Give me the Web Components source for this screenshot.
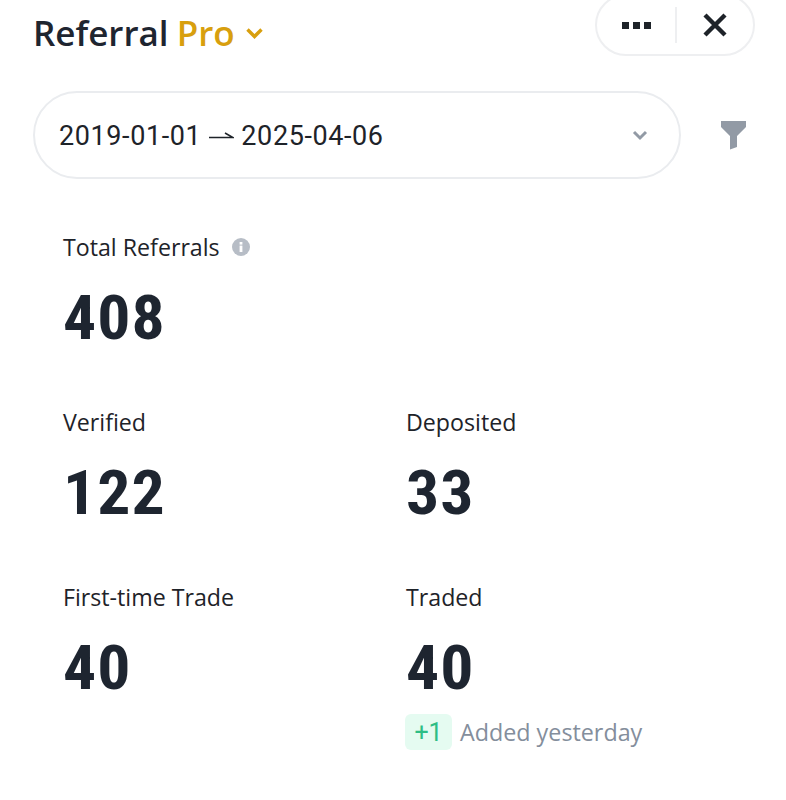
<!DOCTYPE html>
<html>
<head>
<meta charset="utf-8">
<title>Referral Pro</title>
<style>
  html, body { margin: 0; background: #fff; }
  body { width: 786px; height: 800px; overflow: hidden; font-family: "Open Sans", "Liberation Sans", sans-serif; color: #1e2329; }
</style>
</head>
<body>
<top-bar></top-bar>
<date-filter start="2019-01-01" end="2025-04-06"></date-filter>
<stat-grid>
  <stat-item label="Total Referrals" value="408" info style="grid-column: 1 / -1"></stat-item>
  <stat-item label="Verified" value="122"></stat-item>
  <stat-item label="Deposited" value="33"></stat-item>
  <stat-item label="First-time Trade" value="40"></stat-item>
  <stat-item label="Traded" value="40"><added-note count="+1">Added yesterday</added-note></stat-item>
</stat-grid>
<script>
  // small helper, every element here is just a style + markup in an open shadow root
  class Base extends HTMLElement {
    render(html) {
      this.attachShadow({ mode: 'open' }).innerHTML = html;
    }
  }

  customElements.define('top-bar', class extends Base {
    connectedCallback() {
      this.render(`
        <style>
          :host { display: flex; justify-content: space-between; align-items: flex-start; height: 91px; padding: 0 31px 0 33px; box-sizing: border-box; }
          .title { margin-top: 11px; display: flex; align-items: center; font-size: 35px; line-height: 44px; font-weight: 600; color: #1e2530; }
          .pro { color: #d89f0e; margin-left: 8px; }
          .title svg { margin-left: 10px; margin-top: 1px; }
          .pill { margin-top: -6px; width: 160px; height: 62px; box-sizing: border-box; border: 2px solid #eeeff1; border-radius: 31px; display: flex; align-items: center; }
          .more { width: 78px; display: flex; justify-content: flex-end; gap: 4px; padding-right: 24px; box-sizing: border-box; }
          .more i { width: 7px; height: 7px; background: #1e2329; }
          .sep { width: 2px; height: 36px; background: #eeeff1; }
          .close { flex: 1; display: flex; padding-left: 25px; }
        </style>
        <div class="title">Referral<span class="pro">Pro</span>
          <svg width="19" height="13" viewBox="0 0 19 13"><path d="M2.5 2.5 9.5 9.5 16.5 2.5" fill="none" stroke="#d89f0e" stroke-width="3.4"/></svg>
        </div>
        <div class="pill">
          <div class="more"><i></i><i></i><i></i></div>
          <div class="sep"></div>
          <div class="close"><svg width="26" height="26" viewBox="0 0 26 26"><path d="M3 3 23 23M23 3 3 23" fill="none" stroke="#1e2329" stroke-width="4.4"/></svg></div>
        </div>`);
    }
  });

  customElements.define('date-filter', class extends Base {
    connectedCallback() {
      const start = this.getAttribute('start');
      const end = this.getAttribute('end');
      this.render(`
        <style>
          :host { display: flex; align-items: center; padding: 0 39px 0 33px; }
          .box { width: 648px; height: 88px; box-sizing: border-box; border: 2px solid #eaecef; border-radius: 44px; display: flex; align-items: center; padding: 2px 31px 0 24px; font-family: Roboto, sans-serif; font-size: 27px; letter-spacing: 0.6px; }
          .range { flex: 1; display: flex; align-items: center; }
          .range svg { margin: 0 7px 0 8px; }
          .box > svg { margin-top: -2px; }
          .filter { margin-left: 39px; display: block; }
        </style>
        <div class="box">
          <div class="range"><span>${start}</span>
            <svg width="25" height="10" viewBox="0 0 25 10"><path d="M0 6.5H24L16 2" fill="none" stroke="#1e2329" stroke-width="1.6"/></svg>
            <span>${end}</span></div>
          <svg width="16" height="11" viewBox="0 0 16 11"><path d="M2 2 8 8 14 2" fill="none" stroke="#929aa5" stroke-width="3"/></svg>
        </div>
        <svg class="filter" width="27" height="30" viewBox="0 0 27 30"><path d="M1 1H26V7L17 16V27L10 29.5V16L1 7Z" fill="#929aa5"/></svg>`);
    }
  });

  customElements.define('stat-grid', class extends Base {
    connectedCallback() {
      this.render(`
        <style>
          :host { display: grid; grid-template-columns: 343px 1fr; grid-auto-rows: 175px; padding: 53px 0 0 63px; }
        </style>
        <slot></slot>`);
    }
  });

  customElements.define('stat-item', class extends Base {
    connectedCallback() {
      const info = this.hasAttribute('info') ? `
        <svg width="18" height="18" viewBox="0 0 18 18"><circle cx="9" cy="9" r="9" fill="#b7bdc6"/><rect x="7.6" y="7.6" width="2.8" height="6.4" fill="#fff"/><rect x="7.6" y="4" width="2.8" height="2.6" fill="#fff"/></svg>` : '';
      this.render(`
        <style>
          :host { display: block; }
          .label { display: flex; align-items: center; gap: 12px; font-size: 23.2px; line-height: 30px; height: 30px; }
          /* no DIN here: condensed roboto widened a bit is the closest */
          .value { width: fit-content; margin-top: 20px; font-family: Roboto, sans-serif; font-stretch: 85%; font-size: 62px; line-height: 72px; font-weight: 700; letter-spacing: 1px; color: #1e2530; transform: scaleX(1.06); transform-origin: left; }
        </style>
        <div class="label">${this.getAttribute('label')}${info}</div>
        <div class="value">${this.getAttribute('value')}</div>
        <slot></slot>`);
    }
  });

  customElements.define('added-note', class extends Base {
    connectedCallback() {
      this.render(`
        <style>
          :host { display: flex; align-items: center; gap: 8px; margin-top: 10px; margin-left: -1px; font-size: 23.3px; color: #848e9c; }
          .badge { width: 47px; height: 36px; border-radius: 6px; background: #e5fbf1; color: #2ebd85; display: flex; align-items: center; justify-content: center; font-size: 25px; font-family: Roboto, sans-serif; }
        </style>
        <div class="badge">${this.getAttribute('count')}</div>
        <span><slot></slot></span>`);
    }
  });
</script>
</body>
</html>
